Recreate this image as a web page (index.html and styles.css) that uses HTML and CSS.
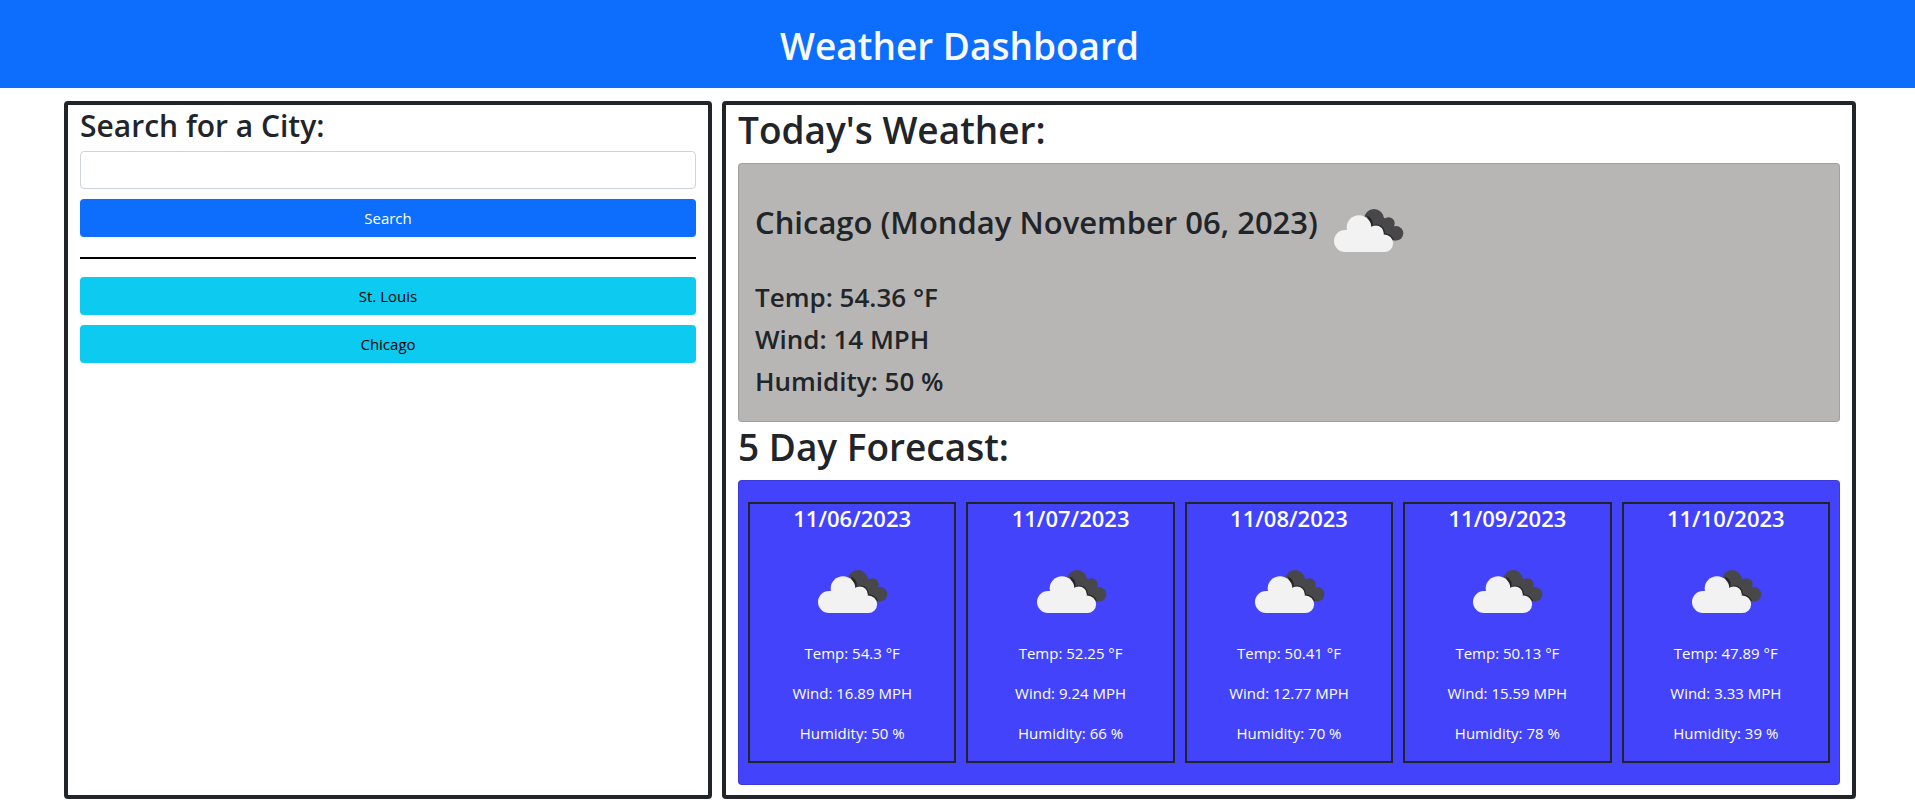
FILE: index.html
```html
<!DOCTYPE html>
<html lang="en">
<head>
<meta charset="utf-8">
<meta name="viewport" content="width=device-width, initial-scale=1">
<title>Weather Dashboard</title>
<link rel="stylesheet" href="styles.css">
</head>
<body>
<svg class="defs" aria-hidden="true">
  <symbol id="clouds" viewBox="0 0 100 100">
    <g transform="translate(16 29)">
      <g fill="#48484a">
        <circle cx="40" cy="10" r="10"/>
        <circle cx="54.5" cy="14.5" r="6.2"/>
        <circle cx="62" cy="24.3" r="7.3"/>
        <path d="M33 12L48 7L60 17L62 31.6L50 30Z"/>
      </g>
      <path fill="#262628" d="M33 6.500C38 9 39.500 13 38.500 16.500C45 13.500 51 18 51 24.500C55 24.500 58.500 27 60 31L50 34L36 20Z"/>
      <g fill="#f2f2f2">
        <circle cx="11" cy="32" r="11"/>
        <circle cx="25" cy="18.500" r="12.300"/>
        <circle cx="41.800" cy="24.500" r="8"/>
        <circle cx="50.300" cy="34.200" r="8.800"/>
        <path d="M11 43V21H13L36 17L50 26L50.300 43Z"/>
      </g>
    </g>
  </symbol>
</svg>
<header class="banner"><h1>Weather Dashboard</h1></header>
<main class="layout">
  <section class="panel">
    <form>
      <h2 class="search-title"><label for="city">Search for a City:</label></h2>
      <input class="field" id="city" type="text">
      <button class="btn btn-primary" type="button">Search</button>
    </form>
    <hr class="rule">
    <div class="history">
      <button class="btn btn-info" type="button">St. Louis</button>
      <button class="btn btn-info" type="button">Chicago</button>
    </div>
  </section>
  <section class="panel">
    <h2 class="section-title">Today's Weather:</h2>
    <article class="card today">
      <h3 class="today-head"><span>Chicago (Monday November 06, 2023)</span><svg class="icon" role="img" aria-label="Broken clouds"><use href="#clouds"/></svg></h3>
      <p>Temp: 54.36 °F</p>
      <p>Wind: 14 MPH</p>
      <p>Humidity: 50 %</p>
    </article>
    <h2 class="section-title">5 Day Forecast:</h2>
    <div class="card forecast">
      <article class="day"><h3>11/06/2023</h3><svg class="icon" role="img" aria-label="Broken clouds"><use href="#clouds"/></svg><p>Temp: 54.3 °F</p><p>Wind: 16.89 MPH</p><p>Humidity: 50 %</p></article>
      <article class="day"><h3>11/07/2023</h3><svg class="icon" role="img" aria-label="Broken clouds"><use href="#clouds"/></svg><p>Temp: 52.25 °F</p><p>Wind: 9.24 MPH</p><p>Humidity: 66 %</p></article>
      <article class="day"><h3>11/08/2023</h3><svg class="icon" role="img" aria-label="Broken clouds"><use href="#clouds"/></svg><p>Temp: 50.41 °F</p><p>Wind: 12.77 MPH</p><p>Humidity: 70 %</p></article>
      <article class="day"><h3>11/09/2023</h3><svg class="icon" role="img" aria-label="Broken clouds"><use href="#clouds"/></svg><p>Temp: 50.13 °F</p><p>Wind: 15.59 MPH</p><p>Humidity: 78 %</p></article>
      <article class="day"><h3>11/10/2023</h3><svg class="icon" role="img" aria-label="Broken clouds"><use href="#clouds"/></svg><p>Temp: 47.89 °F</p><p>Wind: 3.33 MPH</p><p>Humidity: 39 %</p></article>
    </div>
  </section>
</main>
</body>
</html>
```
FILE: styles.css
```css
* { box-sizing: border-box; }
body {
  margin: 0;
  background: #fff;
  color: #212529;
  font: 15px/24px "Open Sans", "Noto Sans", sans-serif;
}
h1, h2, h3, p { margin: 0; }
h1, h2, h3 { font-weight: 600; }
.defs { display: none; }
.icon { display: block; width: 100px; height: 100px; flex: none; }

.banner {
  background: #0d6efd;
  color: #f8f9fa;
  padding: 22px 0 18px 4px;
  text-align: center;
}
.banner h1 { font-size: 37px; line-height: 48px; }

.layout {
  display: grid;
  grid-template-columns: 4fr 7fr;
  gap: 10px;
  padding: 13px 59px 5px 64px;
}
.panel {
  border: 4px solid #212529;
  border-radius: 4px;
  padding: 0 12px 10px;
}

.search-title { font-size: 30px; line-height: 38px; margin: 2px 0 6px; }
.field, .btn {
  display: block;
  width: 100%;
  height: 38px;
  border-radius: 4px;
  font: inherit;
  padding: 6px 12px;
}
.field { border: 1px solid #ced4da; background: #fff; margin-bottom: 10px; }
.btn { border: 0; cursor: pointer; }
.btn-primary { background: #0d6efd; color: #fff; }
.btn-info { background: #0dcaf0; color: #000; }
.rule { border: 0; height: 2px; background: #000; margin: 20px 0 18px; }
.history { display: grid; gap: 10px; }

.section-title { font-size: 37px; line-height: 48px; padding: 1px 0 9px; }
.card { border: 1px solid rgba(0, 0, 0, 0.125); border-radius: 4px; }
.today { background: #b7b6b5; padding: 16px 16px 15px; }
.today-head {
  display: flex;
  align-items: center;
  font-size: 31px;
  line-height: 38px;
}
.today-head span { padding-bottom: 16px; }
.today p { font-size: 26px; line-height: 34px; font-weight: 600; margin-bottom: 8px; }
.forecast {
  display: grid;
  grid-template-columns: repeat(5, 1fr);
  gap: 10px;
  padding: 21px 9px;
  background: #4343fb;
}
.day {
  display: flex;
  flex-direction: column;
  align-items: center;
  border: 2px solid #212529;
  color: #fff;
}
.day h3 { font-size: 22px; line-height: 29px; margin-bottom: 8px; }
.day p { margin-bottom: 16px; }
```
